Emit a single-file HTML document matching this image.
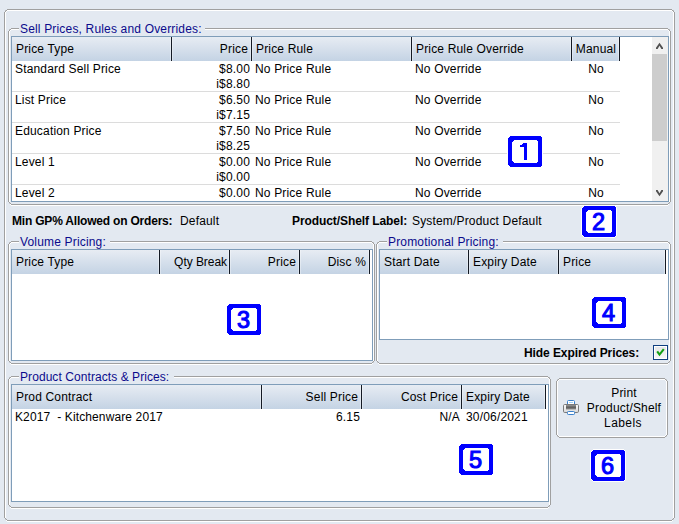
<!DOCTYPE html><html><head><meta charset="utf-8"><style>
html,body{margin:0;padding:0}
body{width:679px;height:524px;overflow:hidden;background:#e3e9f1;position:relative;font-family:"Liberation Sans",sans-serif;font-size:12px;color:#000}
body div{position:absolute}
.t{line-height:14px;white-space:nowrap;letter-spacing:0.17px}
.b{font-weight:bold;letter-spacing:-0.2px}
.dig{font-weight:normal;-webkit-text-stroke:1.1px #0000ff;font-size:23.5px;line-height:17px;height:17px;width:12px;color:#0000ff;}
</style></head><body>
<div style="left:7px;top:10px;width:665px;height:1px;background:#ffffff;"></div>
<div style="left:5px;top:12px;width:1px;height:506px;background:#ffffff;"></div>
<div style="left:673px;top:12px;width:1px;height:506px;background:#ffffff;"></div>
<div style="left:7px;top:521px;width:665px;height:1px;background:#ffffff;"></div>
<div style="left:6px;top:11px;width:1px;height:1px;background:#ffffff;"></div>
<div style="left:672px;top:11px;width:1px;height:1px;background:#ffffff;"></div>
<div style="left:6px;top:520px;width:1px;height:1px;background:#ffffff;"></div>
<div style="left:672px;top:520px;width:1px;height:1px;background:#ffffff;"></div>
<div style="left:7px;top:9px;width:665px;height:1px;background:#a0a0a0;"></div>
<div style="left:7px;top:520px;width:665px;height:1px;background:#a0a0a0;"></div>
<div style="left:4px;top:12px;width:1px;height:506px;background:#a0a0a0;"></div>
<div style="left:674px;top:12px;width:1px;height:506px;background:#a0a0a0;"></div>
<div style="left:5px;top:11px;width:1px;height:1px;background:#a0a0a0;"></div>
<div style="left:6px;top:10px;width:1px;height:1px;background:#a0a0a0;"></div>
<div style="left:673px;top:11px;width:1px;height:1px;background:#a0a0a0;"></div>
<div style="left:672px;top:10px;width:1px;height:1px;background:#a0a0a0;"></div>
<div style="left:5px;top:518px;width:1px;height:1px;background:#a0a0a0;"></div>
<div style="left:6px;top:519px;width:1px;height:1px;background:#a0a0a0;"></div>
<div style="left:673px;top:518px;width:1px;height:1px;background:#a0a0a0;"></div>
<div style="left:672px;top:519px;width:1px;height:1px;background:#a0a0a0;"></div>
<div style="left:5px;top:10px;width:1px;height:1px;background:rgba(160,160,160,0.6);"></div>
<div style="left:673px;top:10px;width:1px;height:1px;background:rgba(160,160,160,0.6);"></div>
<div style="left:5px;top:519px;width:1px;height:1px;background:rgba(160,160,160,0.35);"></div>
<div style="left:673px;top:519px;width:1px;height:1px;background:rgba(160,160,160,0.35);"></div>
<div style="left:11px;top:29px;width:657px;height:1px;background:#ffffff;"></div>
<div style="left:9px;top:31px;width:1px;height:171px;background:#ffffff;"></div>
<div style="left:669px;top:31px;width:1px;height:171px;background:#ffffff;"></div>
<div style="left:11px;top:205px;width:657px;height:1px;background:#ffffff;"></div>
<div style="left:10px;top:30px;width:1px;height:1px;background:#ffffff;"></div>
<div style="left:668px;top:30px;width:1px;height:1px;background:#ffffff;"></div>
<div style="left:10px;top:204px;width:1px;height:1px;background:#ffffff;"></div>
<div style="left:668px;top:204px;width:1px;height:1px;background:#ffffff;"></div>
<div style="left:11px;top:28px;width:657px;height:1px;background:#a0a0a0;"></div>
<div style="left:11px;top:204px;width:657px;height:1px;background:#a0a0a0;"></div>
<div style="left:8px;top:31px;width:1px;height:171px;background:#a0a0a0;"></div>
<div style="left:670px;top:31px;width:1px;height:171px;background:#a0a0a0;"></div>
<div style="left:9px;top:30px;width:1px;height:1px;background:#a0a0a0;"></div>
<div style="left:10px;top:29px;width:1px;height:1px;background:#a0a0a0;"></div>
<div style="left:669px;top:30px;width:1px;height:1px;background:#a0a0a0;"></div>
<div style="left:668px;top:29px;width:1px;height:1px;background:#a0a0a0;"></div>
<div style="left:9px;top:202px;width:1px;height:1px;background:#a0a0a0;"></div>
<div style="left:10px;top:203px;width:1px;height:1px;background:#a0a0a0;"></div>
<div style="left:669px;top:202px;width:1px;height:1px;background:#a0a0a0;"></div>
<div style="left:668px;top:203px;width:1px;height:1px;background:#a0a0a0;"></div>
<div style="left:9px;top:29px;width:1px;height:1px;background:rgba(160,160,160,0.6);"></div>
<div style="left:669px;top:29px;width:1px;height:1px;background:rgba(160,160,160,0.6);"></div>
<div style="left:9px;top:203px;width:1px;height:1px;background:rgba(160,160,160,0.35);"></div>
<div style="left:669px;top:203px;width:1px;height:1px;background:rgba(160,160,160,0.35);"></div>
<div style="left:19px;top:22px;width:186px;height:10px;background:#e3e9f1;"></div>
<div class="t" style="left:20px;top:22px;color:#0b0b8c;">Sell Prices, Rules and Overrides:</div>
<div style="left:11px;top:36px;width:658px;height:166px;background:#ffffff;box-sizing:border-box;border:1px solid #7f9db9"></div>
<div style="left:12px;top:37px;width:608px;height:24px;background:linear-gradient(#e7ecf3,#c4d3e4);"></div>
<div style="left:170px;top:37px;width:1px;height:24px;background:rgba(255,255,255,0.35);"></div>
<div style="left:172px;top:37px;width:1px;height:24px;background:rgba(255,255,255,0.35);"></div>
<div style="left:171px;top:37px;width:1px;height:24px;background:#141a24;"></div>
<div style="left:250px;top:37px;width:1px;height:24px;background:rgba(255,255,255,0.35);"></div>
<div style="left:252px;top:37px;width:1px;height:24px;background:rgba(255,255,255,0.35);"></div>
<div style="left:251px;top:37px;width:1px;height:24px;background:#141a24;"></div>
<div style="left:410px;top:37px;width:1px;height:24px;background:rgba(255,255,255,0.35);"></div>
<div style="left:412px;top:37px;width:1px;height:24px;background:rgba(255,255,255,0.35);"></div>
<div style="left:411px;top:37px;width:1px;height:24px;background:#141a24;"></div>
<div style="left:570px;top:37px;width:1px;height:24px;background:rgba(255,255,255,0.35);"></div>
<div style="left:572px;top:37px;width:1px;height:24px;background:rgba(255,255,255,0.35);"></div>
<div style="left:571px;top:37px;width:1px;height:24px;background:#141a24;"></div>
<div style="left:618px;top:37px;width:1px;height:24px;background:rgba(255,255,255,0.35);"></div>
<div style="left:619px;top:37px;width:1px;height:24px;background:#141a24;"></div>
<div class="t" style="left:16px;top:42px;">Price Type</div>
<div class="t" style="left:-52px;width:300px;text-align:right;top:42px;">Price</div>
<div class="t" style="left:256px;top:42px;">Price Rule</div>
<div class="t" style="left:416px;top:42px;">Price Rule Override</div>
<div class="t" style="left:446px;width:300px;text-align:center;top:42px;">Manual</div>
<div style="left:12px;top:61px;width:640px;height:140px;overflow:hidden">
<div class="t" style="left:3px;top:1px">Standard Sell Price</div>
<div class="t" style="left:-62px;width:300px;text-align:right;top:1px">$8.00</div>
<div class="t" style="left:-62px;width:300px;text-align:right;top:16px">i$8.80</div>
<div class="t" style="left:243px;top:1px">No Price Rule</div>
<div class="t" style="left:403px;top:1px">No Override</div>
<div class="t" style="left:434px;width:300px;text-align:center;top:1px">No</div>
<div style="left:0px;top:30px;width:608px;height:1px;background:#dcdcdc"></div>
<div class="t" style="left:3px;top:32px">List Price</div>
<div class="t" style="left:-62px;width:300px;text-align:right;top:32px">$6.50</div>
<div class="t" style="left:-62px;width:300px;text-align:right;top:47px">i$7.15</div>
<div class="t" style="left:243px;top:32px">No Price Rule</div>
<div class="t" style="left:403px;top:32px">No Override</div>
<div class="t" style="left:434px;width:300px;text-align:center;top:32px">No</div>
<div style="left:0px;top:61px;width:608px;height:1px;background:#dcdcdc"></div>
<div class="t" style="left:3px;top:63px">Education Price</div>
<div class="t" style="left:-62px;width:300px;text-align:right;top:63px">$7.50</div>
<div class="t" style="left:-62px;width:300px;text-align:right;top:78px">i$8.25</div>
<div class="t" style="left:243px;top:63px">No Price Rule</div>
<div class="t" style="left:403px;top:63px">No Override</div>
<div class="t" style="left:434px;width:300px;text-align:center;top:63px">No</div>
<div style="left:0px;top:92px;width:608px;height:1px;background:#dcdcdc"></div>
<div class="t" style="left:3px;top:94px">Level 1</div>
<div class="t" style="left:-62px;width:300px;text-align:right;top:94px">$0.00</div>
<div class="t" style="left:-62px;width:300px;text-align:right;top:109px">i$0.00</div>
<div class="t" style="left:243px;top:94px">No Price Rule</div>
<div class="t" style="left:403px;top:94px">No Override</div>
<div class="t" style="left:434px;width:300px;text-align:center;top:94px">No</div>
<div style="left:0px;top:123px;width:608px;height:1px;background:#dcdcdc"></div>
<div class="t" style="left:3px;top:125px">Level 2</div>
<div class="t" style="left:-62px;width:300px;text-align:right;top:125px">$0.00</div>
<div class="t" style="left:-62px;width:300px;text-align:right;top:140px">i$0.00</div>
<div class="t" style="left:243px;top:125px">No Price Rule</div>
<div class="t" style="left:403px;top:125px">No Override</div>
<div class="t" style="left:434px;width:300px;text-align:center;top:125px">No</div>
</div>
<div style="left:652px;top:37px;width:16px;height:164px;background:#f0f0f0;"></div>
<div style="left:652px;top:54px;width:15px;height:87px;background:#cdcdcd;"></div>
<svg style="position:absolute;left:652px;top:37px" width="16" height="164"><polygon points="7.5,5.8 11,10.8 11,12 9.4,12 7.5,8.7 5.6,12 4,12 4,10.8" fill="#505050"/><polygon points="7.5,159.2 11,154.2 11,153 9.4,153 7.5,156.3 5.6,153 4,153 4,154.2" fill="#505050"/></svg>
<div class="t b" style="left:12px;top:214px;">Min GP% Allowed on Orders:</div>
<div class="t" style="left:180px;top:214px;">Default</div>
<div class="t b" style="left:292px;top:214px;letter-spacing:-0.08px">Product/Shelf Label:</div>
<div class="t" style="left:412px;top:214px;">System/Product Default</div>
<div style="left:11px;top:242px;width:361px;height:1px;background:#ffffff;"></div>
<div style="left:9px;top:244px;width:1px;height:117px;background:#ffffff;"></div>
<div style="left:373px;top:244px;width:1px;height:117px;background:#ffffff;"></div>
<div style="left:11px;top:364px;width:361px;height:1px;background:#ffffff;"></div>
<div style="left:10px;top:243px;width:1px;height:1px;background:#ffffff;"></div>
<div style="left:372px;top:243px;width:1px;height:1px;background:#ffffff;"></div>
<div style="left:10px;top:363px;width:1px;height:1px;background:#ffffff;"></div>
<div style="left:372px;top:363px;width:1px;height:1px;background:#ffffff;"></div>
<div style="left:11px;top:241px;width:361px;height:1px;background:#a0a0a0;"></div>
<div style="left:11px;top:363px;width:361px;height:1px;background:#a0a0a0;"></div>
<div style="left:8px;top:244px;width:1px;height:117px;background:#a0a0a0;"></div>
<div style="left:374px;top:244px;width:1px;height:117px;background:#a0a0a0;"></div>
<div style="left:9px;top:243px;width:1px;height:1px;background:#a0a0a0;"></div>
<div style="left:10px;top:242px;width:1px;height:1px;background:#a0a0a0;"></div>
<div style="left:373px;top:243px;width:1px;height:1px;background:#a0a0a0;"></div>
<div style="left:372px;top:242px;width:1px;height:1px;background:#a0a0a0;"></div>
<div style="left:9px;top:361px;width:1px;height:1px;background:#a0a0a0;"></div>
<div style="left:10px;top:362px;width:1px;height:1px;background:#a0a0a0;"></div>
<div style="left:373px;top:361px;width:1px;height:1px;background:#a0a0a0;"></div>
<div style="left:372px;top:362px;width:1px;height:1px;background:#a0a0a0;"></div>
<div style="left:9px;top:242px;width:1px;height:1px;background:rgba(160,160,160,0.6);"></div>
<div style="left:373px;top:242px;width:1px;height:1px;background:rgba(160,160,160,0.6);"></div>
<div style="left:9px;top:362px;width:1px;height:1px;background:rgba(160,160,160,0.35);"></div>
<div style="left:373px;top:362px;width:1px;height:1px;background:rgba(160,160,160,0.35);"></div>
<div style="left:19px;top:235px;width:91px;height:10px;background:#e3e9f1;"></div>
<div class="t" style="left:20px;top:235px;color:#0b0b8c;">Volume Pricing:</div>
<div style="left:11px;top:249px;width:362px;height:112px;background:#ffffff;box-sizing:border-box;border:1px solid #7f9db9"></div>
<div style="left:12px;top:250px;width:358px;height:24px;background:linear-gradient(#e7ecf3,#c4d3e4);"></div>
<div style="left:158px;top:250px;width:1px;height:24px;background:rgba(255,255,255,0.35);"></div>
<div style="left:160px;top:250px;width:1px;height:24px;background:rgba(255,255,255,0.35);"></div>
<div style="left:159px;top:250px;width:1px;height:24px;background:#141a24;"></div>
<div style="left:228px;top:250px;width:1px;height:24px;background:rgba(255,255,255,0.35);"></div>
<div style="left:230px;top:250px;width:1px;height:24px;background:rgba(255,255,255,0.35);"></div>
<div style="left:229px;top:250px;width:1px;height:24px;background:#141a24;"></div>
<div style="left:298px;top:250px;width:1px;height:24px;background:rgba(255,255,255,0.35);"></div>
<div style="left:300px;top:250px;width:1px;height:24px;background:rgba(255,255,255,0.35);"></div>
<div style="left:299px;top:250px;width:1px;height:24px;background:#141a24;"></div>
<div style="left:368px;top:250px;width:1px;height:24px;background:rgba(255,255,255,0.35);"></div>
<div style="left:369px;top:250px;width:1px;height:24px;background:#141a24;"></div>
<div class="t" style="left:16px;top:255px;">Price Type</div>
<div class="t" style="left:-73px;width:300px;text-align:right;top:255px;letter-spacing:-0.05px">Qty Break</div>
<div class="t" style="left:-4px;width:300px;text-align:right;top:255px;">Price</div>
<div class="t" style="left:66px;width:300px;text-align:right;top:255px;">Disc %</div>
<div style="left:379px;top:242px;width:289px;height:1px;background:#ffffff;"></div>
<div style="left:377px;top:244px;width:1px;height:117px;background:#ffffff;"></div>
<div style="left:669px;top:244px;width:1px;height:117px;background:#ffffff;"></div>
<div style="left:379px;top:364px;width:289px;height:1px;background:#ffffff;"></div>
<div style="left:378px;top:243px;width:1px;height:1px;background:#ffffff;"></div>
<div style="left:668px;top:243px;width:1px;height:1px;background:#ffffff;"></div>
<div style="left:378px;top:363px;width:1px;height:1px;background:#ffffff;"></div>
<div style="left:668px;top:363px;width:1px;height:1px;background:#ffffff;"></div>
<div style="left:379px;top:241px;width:289px;height:1px;background:#a0a0a0;"></div>
<div style="left:379px;top:363px;width:289px;height:1px;background:#a0a0a0;"></div>
<div style="left:376px;top:244px;width:1px;height:117px;background:#a0a0a0;"></div>
<div style="left:670px;top:244px;width:1px;height:117px;background:#a0a0a0;"></div>
<div style="left:377px;top:243px;width:1px;height:1px;background:#a0a0a0;"></div>
<div style="left:378px;top:242px;width:1px;height:1px;background:#a0a0a0;"></div>
<div style="left:669px;top:243px;width:1px;height:1px;background:#a0a0a0;"></div>
<div style="left:668px;top:242px;width:1px;height:1px;background:#a0a0a0;"></div>
<div style="left:377px;top:361px;width:1px;height:1px;background:#a0a0a0;"></div>
<div style="left:378px;top:362px;width:1px;height:1px;background:#a0a0a0;"></div>
<div style="left:669px;top:361px;width:1px;height:1px;background:#a0a0a0;"></div>
<div style="left:668px;top:362px;width:1px;height:1px;background:#a0a0a0;"></div>
<div style="left:377px;top:242px;width:1px;height:1px;background:rgba(160,160,160,0.6);"></div>
<div style="left:669px;top:242px;width:1px;height:1px;background:rgba(160,160,160,0.6);"></div>
<div style="left:377px;top:362px;width:1px;height:1px;background:rgba(160,160,160,0.35);"></div>
<div style="left:669px;top:362px;width:1px;height:1px;background:rgba(160,160,160,0.35);"></div>
<div style="left:387px;top:235px;width:116px;height:10px;background:#e3e9f1;"></div>
<div class="t" style="left:388px;top:235px;color:#0b0b8c;">Promotional Pricing:</div>
<div style="left:379px;top:249px;width:290px;height:91px;background:#ffffff;box-sizing:border-box;border:1px solid #7f9db9"></div>
<div style="left:380px;top:250px;width:286px;height:24px;background:linear-gradient(#e7ecf3,#c4d3e4);"></div>
<div style="left:467px;top:250px;width:1px;height:24px;background:rgba(255,255,255,0.35);"></div>
<div style="left:469px;top:250px;width:1px;height:24px;background:rgba(255,255,255,0.35);"></div>
<div style="left:468px;top:250px;width:1px;height:24px;background:#141a24;"></div>
<div style="left:557px;top:250px;width:1px;height:24px;background:rgba(255,255,255,0.35);"></div>
<div style="left:559px;top:250px;width:1px;height:24px;background:rgba(255,255,255,0.35);"></div>
<div style="left:558px;top:250px;width:1px;height:24px;background:#141a24;"></div>
<div style="left:664px;top:250px;width:1px;height:24px;background:rgba(255,255,255,0.35);"></div>
<div style="left:665px;top:250px;width:1px;height:24px;background:#141a24;"></div>
<div class="t" style="left:384px;top:255px;">Start Date</div>
<div class="t" style="left:473px;top:255px;">Expiry Date</div>
<div class="t" style="left:563px;top:255px;">Price</div>
<div class="t b" style="left:524px;top:346px;letter-spacing:-0.08px">Hide Expired Prices:</div>
<div style="left:653px;top:345px;width:13px;height:13px;border:1px solid #0f3f7f;background:linear-gradient(#e6e6e6,#f6f6f6);box-shadow:inset 0 0 0 1px #fff"></div>
<svg style="position:absolute;left:653px;top:345px" width="15" height="15"><polyline points="4.2,6.4 6.5,9.6 10.8,4.2" fill="none" stroke="#14a014" stroke-width="2.1"/></svg>
<div style="left:11px;top:377px;width:537px;height:1px;background:#ffffff;"></div>
<div style="left:9px;top:379px;width:1px;height:126px;background:#ffffff;"></div>
<div style="left:549px;top:379px;width:1px;height:126px;background:#ffffff;"></div>
<div style="left:11px;top:508px;width:537px;height:1px;background:#ffffff;"></div>
<div style="left:10px;top:378px;width:1px;height:1px;background:#ffffff;"></div>
<div style="left:548px;top:378px;width:1px;height:1px;background:#ffffff;"></div>
<div style="left:10px;top:507px;width:1px;height:1px;background:#ffffff;"></div>
<div style="left:548px;top:507px;width:1px;height:1px;background:#ffffff;"></div>
<div style="left:11px;top:376px;width:537px;height:1px;background:#a0a0a0;"></div>
<div style="left:11px;top:507px;width:537px;height:1px;background:#a0a0a0;"></div>
<div style="left:8px;top:379px;width:1px;height:126px;background:#a0a0a0;"></div>
<div style="left:550px;top:379px;width:1px;height:126px;background:#a0a0a0;"></div>
<div style="left:9px;top:378px;width:1px;height:1px;background:#a0a0a0;"></div>
<div style="left:10px;top:377px;width:1px;height:1px;background:#a0a0a0;"></div>
<div style="left:549px;top:378px;width:1px;height:1px;background:#a0a0a0;"></div>
<div style="left:548px;top:377px;width:1px;height:1px;background:#a0a0a0;"></div>
<div style="left:9px;top:505px;width:1px;height:1px;background:#a0a0a0;"></div>
<div style="left:10px;top:506px;width:1px;height:1px;background:#a0a0a0;"></div>
<div style="left:549px;top:505px;width:1px;height:1px;background:#a0a0a0;"></div>
<div style="left:548px;top:506px;width:1px;height:1px;background:#a0a0a0;"></div>
<div style="left:9px;top:377px;width:1px;height:1px;background:rgba(160,160,160,0.6);"></div>
<div style="left:549px;top:377px;width:1px;height:1px;background:rgba(160,160,160,0.6);"></div>
<div style="left:9px;top:506px;width:1px;height:1px;background:rgba(160,160,160,0.35);"></div>
<div style="left:549px;top:506px;width:1px;height:1px;background:rgba(160,160,160,0.35);"></div>
<div style="left:19px;top:370px;width:155px;height:10px;background:#e3e9f1;"></div>
<div class="t" style="left:20px;top:370px;color:#0b0b8c;letter-spacing:0.07px">Product Contracts &amp; Prices:</div>
<div style="left:11px;top:384px;width:538px;height:118px;background:#ffffff;box-sizing:border-box;border:1px solid #7f9db9"></div>
<div style="left:12px;top:385px;width:534px;height:24px;background:linear-gradient(#e7ecf3,#c4d3e4);"></div>
<div style="left:260px;top:385px;width:1px;height:24px;background:rgba(255,255,255,0.35);"></div>
<div style="left:262px;top:385px;width:1px;height:24px;background:rgba(255,255,255,0.35);"></div>
<div style="left:261px;top:385px;width:1px;height:24px;background:#141a24;"></div>
<div style="left:360px;top:385px;width:1px;height:24px;background:rgba(255,255,255,0.35);"></div>
<div style="left:362px;top:385px;width:1px;height:24px;background:rgba(255,255,255,0.35);"></div>
<div style="left:361px;top:385px;width:1px;height:24px;background:#141a24;"></div>
<div style="left:460px;top:385px;width:1px;height:24px;background:rgba(255,255,255,0.35);"></div>
<div style="left:462px;top:385px;width:1px;height:24px;background:rgba(255,255,255,0.35);"></div>
<div style="left:461px;top:385px;width:1px;height:24px;background:#141a24;"></div>
<div style="left:544px;top:385px;width:1px;height:24px;background:rgba(255,255,255,0.35);"></div>
<div style="left:545px;top:385px;width:1px;height:24px;background:#141a24;"></div>
<div class="t" style="left:16px;top:390px;">Prod Contract</div>
<div class="t" style="left:58px;width:300px;text-align:right;top:390px;">Sell Price</div>
<div class="t" style="left:158px;width:300px;text-align:right;top:390px;">Cost Price</div>
<div class="t" style="left:466px;top:390px;">Expiry Date</div>
<div class="t" style="left:15px;top:410px;letter-spacing:0.12px">K2017&nbsp; - Kitchenware 2017</div>
<div class="t" style="left:60px;width:300px;text-align:right;top:410px;">6.15</div>
<div class="t" style="left:160px;width:300px;text-align:right;top:410px;">N/A</div>
<div class="t" style="left:466px;top:410px;">30/06/2021</div>
<div style="left:559px;top:379px;width:106px;height:1px;background:#ffffff;"></div>
<div style="left:559px;top:436px;width:106px;height:1px;background:#ffffff;"></div>
<div style="left:557px;top:381px;width:1px;height:54px;background:#ffffff;"></div>
<div style="left:666px;top:381px;width:1px;height:54px;background:#ffffff;"></div>
<div style="left:558px;top:380px;width:1px;height:1px;background:#ffffff;"></div>
<div style="left:665px;top:380px;width:1px;height:1px;background:#ffffff;"></div>
<div style="left:558px;top:435px;width:1px;height:1px;background:#ffffff;"></div>
<div style="left:665px;top:435px;width:1px;height:1px;background:#ffffff;"></div>
<div style="left:559px;top:378px;width:106px;height:1px;background:#a0a0a0;"></div>
<div style="left:559px;top:437px;width:106px;height:1px;background:#a0a0a0;"></div>
<div style="left:556px;top:381px;width:1px;height:54px;background:#a0a0a0;"></div>
<div style="left:667px;top:381px;width:1px;height:54px;background:#a0a0a0;"></div>
<div style="left:557px;top:380px;width:1px;height:1px;background:#a0a0a0;"></div>
<div style="left:558px;top:379px;width:1px;height:1px;background:#a0a0a0;"></div>
<div style="left:666px;top:380px;width:1px;height:1px;background:#a0a0a0;"></div>
<div style="left:665px;top:379px;width:1px;height:1px;background:#a0a0a0;"></div>
<div style="left:557px;top:435px;width:1px;height:1px;background:#a0a0a0;"></div>
<div style="left:558px;top:436px;width:1px;height:1px;background:#a0a0a0;"></div>
<div style="left:666px;top:435px;width:1px;height:1px;background:#a0a0a0;"></div>
<div style="left:665px;top:436px;width:1px;height:1px;background:#a0a0a0;"></div>
<div style="left:557px;top:379px;width:1px;height:1px;background:rgba(160,160,160,0.4);"></div>
<div style="left:666px;top:379px;width:1px;height:1px;background:rgba(160,160,160,0.4);"></div>
<div style="left:557px;top:436px;width:1px;height:1px;background:rgba(160,160,160,0.4);"></div>
<div style="left:666px;top:436px;width:1px;height:1px;background:rgba(160,160,160,0.4);"></div>
<div class="t" style="left:474px;width:300px;text-align:center;top:386px;">Print</div>
<div class="t" style="left:474px;width:300px;text-align:center;top:401px;">Product/Shelf</div>
<div class="t" style="left:473px;width:300px;text-align:center;top:416px;letter-spacing:0.4px">Labels</div>
<svg style="position:absolute;left:563px;top:399px" width="16" height="16">
<defs><linearGradient id="pb" x1="0" y1="0" x2="0" y2="1"><stop offset="0" stop-color="#fdfdfd"/><stop offset="1" stop-color="#d8d8d8"/></linearGradient>
<linearGradient id="band" x1="0" y1="0" x2="0" y2="1"><stop offset="0" stop-color="#9a9a9a"/><stop offset="0.5" stop-color="#5c5c5c"/><stop offset="1" stop-color="#8e8e8e"/></linearGradient></defs>
<rect x="4.5" y="1.5" width="7" height="6" rx="1" fill="#fff" stroke="#3a80cc"/>
<rect x="6" y="3" width="4" height="1" fill="#9fd0f7"/>
<rect x="0.5" y="5.5" width="15" height="8" rx="1.2" fill="url(#pb)" stroke="#7a7a7a"/>
<rect x="3" y="6" width="10" height="4.5" fill="url(#band)"/>
<rect x="4.5" y="12.5" width="7" height="3" rx="0.8" fill="#fff" stroke="#3a80cc"/>
</svg>
<svg style="position:absolute;left:507px;top:135px" width="36" height="33" shape-rendering="crispEdges"><polygon points="3,0 33,0 36,3 36,30 33,33 3,33 0,30 0,3" fill="#fff"/><polygon points="3,1 33,1 35,3 35,30 33,32 3,32 1,30 1,3" fill="#0000ff"/><polygon points="7,5 29,5 31,7 31,26 29,28 7,28 5,26 5,7" fill="#fff"/><polygon points="17,8 20,8 20,25 17,25 17,12 13,12 13,10 15,10 15,9 16,9 16,8" fill="#0000ff"/></svg>
<svg style="position:absolute;left:581px;top:205px" width="36" height="33" shape-rendering="crispEdges"><polygon points="3,0 33,0 36,3 36,30 33,33 3,33 0,30 0,3" fill="#fff"/><polygon points="3,1 33,1 35,3 35,30 33,32 3,32 1,30 1,3" fill="#0000ff"/><polygon points="7,5 29,5 31,7 31,26 29,28 7,28 5,26 5,7" fill="#fff"/></svg>
<div class="dig" style="left:592px;top:214px">2</div>
<svg style="position:absolute;left:226px;top:303px" width="36" height="33" shape-rendering="crispEdges"><polygon points="3,0 33,0 36,3 36,30 33,33 3,33 0,30 0,3" fill="#fff"/><polygon points="3,1 33,1 35,3 35,30 33,32 3,32 1,30 1,3" fill="#0000ff"/><polygon points="7,5 29,5 31,7 31,26 29,28 7,28 5,26 5,7" fill="#fff"/></svg>
<div class="dig" style="left:237px;top:312px">3</div>
<svg style="position:absolute;left:591px;top:296px" width="36" height="33" shape-rendering="crispEdges"><polygon points="3,0 33,0 36,3 36,30 33,33 3,33 0,30 0,3" fill="#fff"/><polygon points="3,1 33,1 35,3 35,30 33,32 3,32 1,30 1,3" fill="#0000ff"/><polygon points="7,5 29,5 31,7 31,26 29,28 7,28 5,26 5,7" fill="#fff"/></svg>
<div class="dig" style="left:602px;top:305px">4</div>
<svg style="position:absolute;left:458px;top:443px" width="36" height="33" shape-rendering="crispEdges"><polygon points="3,0 33,0 36,3 36,30 33,33 3,33 0,30 0,3" fill="#fff"/><polygon points="3,1 33,1 35,3 35,30 33,32 3,32 1,30 1,3" fill="#0000ff"/><polygon points="7,5 29,5 31,7 31,26 29,28 7,28 5,26 5,7" fill="#fff"/></svg>
<div class="dig" style="left:469px;top:452px">5</div>
<svg style="position:absolute;left:590px;top:449px" width="36" height="33" shape-rendering="crispEdges"><polygon points="3,0 33,0 36,3 36,30 33,33 3,33 0,30 0,3" fill="#fff"/><polygon points="3,1 33,1 35,3 35,30 33,32 3,32 1,30 1,3" fill="#0000ff"/><polygon points="7,5 29,5 31,7 31,26 29,28 7,28 5,26 5,7" fill="#fff"/></svg>
<div class="dig" style="left:601px;top:458px">6</div>
</body></html>
